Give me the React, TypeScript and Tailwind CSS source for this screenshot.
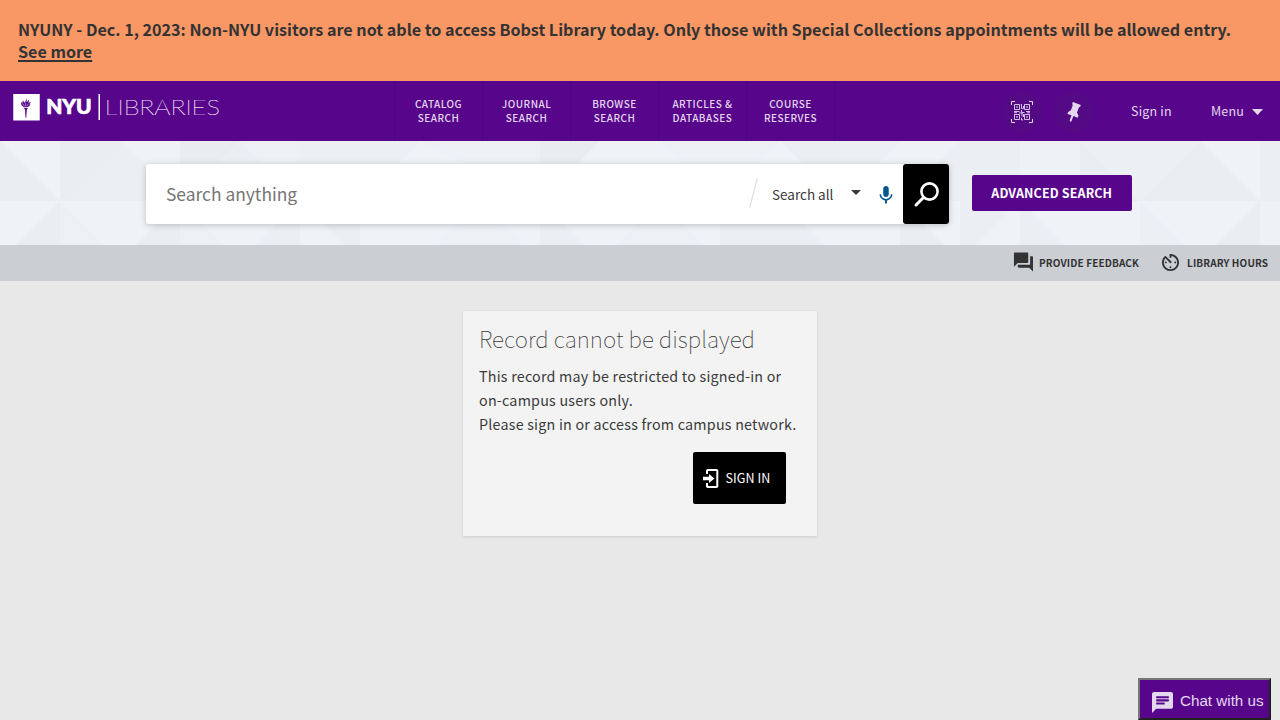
import type { ReactNode } from "react";

const links = [
  ["CATALOG", "SEARCH"],
  ["JOURNAL", "SEARCH"],
  ["BROWSE", "SEARCH"],
  ["ARTICLES &", "DATABASES"],
  ["COURSE", "RESERVES"],
];

const LIGHT = "#eff3f8";
const MID = "#edf0f5";
const DARK = "#eaedf2";

const triangles: [string, string][] = [
  ["0,0 60,60 0,60", DARK],
  ["60,0 120,0 180,60 60,60", "#ebeff3"],
  ["60,60 120,0 60,0", DARK],
  ["180,0 240,0 180,60", "#e9edf2"],
  ["240,0 180,60 300,60", "#ebeff4"],
  ["240,0 300,0 300,60", MID],
  ["300,0 420,0 360,60 300,60", "#ecf0f5"],
  ["420,0 540,0 540,60", MID],
  ["540,0 600,0 540,60", "#e9edf2"],
  ["660,0 780,0 720,60", MID],
  ["780,0 840,0 840,60", "#ebeef3"],
  ["840,0 900,0 840,60", "#ecf0f5"],
  ["900,60 960,0 960,60", "#ebeef3"],
  ["960,0 1020,0 1020,60 960,60", "#ebeff4"],
  ["1020,0 1080,0 1080,60 1020,60", "#eef2f7"],
  ["1080,0 1140,60 1080,60", DARK],
  ["1080,0 1200,0 1140,60", "#ecf0f5"],
  ["1200,0 1260,60 1140,60", DARK],
  ["1260,0 1280,0 1280,60 1260,60", "#ebeff4"],
  ["60,60 60,120 0,120", DARK],
  ["60,60 120,120 60,120", "#edf1f6"],
  ["180,60 180,120 120,120", DARK],
  ["180,60 240,120 180,120", "#edf1f6"],
  ["300,60 300,120 240,120", "#ebeef3"],
  ["300,60 360,60 360,120", "#ebeff4"],
  ["480,60 540,120 420,120", MID],
  ["540,60 540,120 600,120", "#ebeef3"],
  ["660,60 720,120 600,120", MID],
  ["720,60 780,60 780,120 720,120", "#ebeff4"],
  ["780,60 840,120 780,120", "#ebeef3"],
  ["900,60 960,120 900,120", "#eaedf2"],
  ["960,60 1020,60 960,120", "#ebeff4"],
  ["1020,60 1080,120 1020,120", "#ebeef3"],
  ["1140,60 1200,120 1140,120", "#ecf0f5"],
  ["1260,60 1260,120 1200,120", DARK],
  ["1260,60 1280,60 1280,120 1260,120", "#eef1f6"],
];

function Backdrop() {
  return (
    <svg className="absolute inset-0 h-full w-full" viewBox="0 0 1280 104" aria-hidden="true">
      <rect width="1280" height="104" fill={LIGHT} />
      {triangles.map(([p, f], i) => (
        <polygon key={i} points={p} fill={f} />
      ))}
    </svg>
  );
}

function Torch() {
  return (
    <svg className="h-[26.500px] w-[27px] shrink-0" viewBox="0 0 27 27" aria-hidden="true">
      <rect width="27" height="27" fill="#fff" />
      <g fill="#57068c">
        <path d="M11 14.200h3.800l-1 2-.5 8h-.8l-.5-8z" />
        <path d="M11 13.400C8.600 12.500 7.600 11 8 8.200c.6.8 1 .9 1.300.5.2-1 .6-1.800 1.300-2.400-.2 1.700.1 2.400.7 2.500.9-.6 1.500-1.800 2.300-4.100.5 1.600.2 2.600-.3 3.700 1-.3 1.800-1.200 2.900-2.700.1 1.500-.3 2.200-1 3.100.8-.1 1.500-.4 2.800-1-.5 1.700-1.300 2.300-2 2.700.6.1 1 .1 1.600-.1-.6 1.600-2 2.600-3.600 3z" />
      </g>
      <path d="M9.500 9.500l1.800 3M12.800 8.800l-.5 3.800M15.500 10l-1.800 2.500" stroke="#fff" strokeWidth=".5" fill="none" />
    </svg>
  );
}

function QrIcon() {
  return (
    <svg className="h-[22px] w-[22px]" viewBox="0 0 22 22" fill="none" stroke="#e4d8ee" aria-hidden="true">
      <path d="M.5 4V.5H4M18 .5h3.500V4M21.500 18v3.500H18M4 21.500H.5V18" />
      <g strokeWidth=".9">
        <path d="M3.500 3.500h5v5h-5zM13.500 3.500h5v5h-5zM3.500 13.500h5v5h-5zM13.500 13.500h5v5h-5z" />
        <path d="M10.500 3v4.500h2V5M3 10.500h5.500M10.500 9v2.500h3M15 10.500h4M3 11.700h3M8 12h3v3.500M10.500 17v2h1.500M12.500 13v3M16 11.800h3" />
      </g>
      <path d="M5.300 6h1.400M15.300 6h1.400M5.300 16h1.400M15.300 16h1.400" strokeWidth="1.400" />
    </svg>
  );
}

function Round({ children }: { children: ReactNode }) {
  return <div className="flex h-10 w-10 items-center justify-center rounded-full bg-[#540a85]">{children}</div>;
}

export default function App() {
  return (
    <div className="relative flex h-[720px] w-[1280px] flex-col overflow-hidden bg-[#e8e8e8] font-['Noto_Sans_CJK_SC','Open_Sans',sans-serif] text-[#3a3a3a]">
      <div className="h-[81px] shrink-0 bg-[#f99765] px-[18px] pt-[18px] text-[16.11px] leading-[22px] font-bold text-[#333]">
        <div className="whitespace-nowrap">
          NYUNY - Dec. 1, 2023: Non-NYU visitors are not able to access Bobst Library today. Only those with Special Collections appointments will be allowed entry.
        </div>
        <a className="underline decoration-[1.500px] underline-offset-2">See more</a>
      </div>

      <header className="flex h-[60px] shrink-0 bg-[#57068c] text-[#e4d8ee]">
        <div className="flex w-[394px] items-start pt-[13px] pl-[13px] text-white">
          <Torch />
          <svg className="h-[27px] w-[184px]" viewBox="0 0 184 27" aria-label="NYU Libraries">
            <text x="6.200" y="20.300" textLength="45.500" lengthAdjust="spacingAndGlyphs" fill="#fff" stroke="#fff" strokeWidth=".7" fontFamily="Lato" fontWeight="900" fontSize="20.800">NYU</text>
            <rect x="58.500" width="1.500" height="26" fill="#fff" />
            <text x="64.800" y="20.500" textLength="115" lengthAdjust="spacingAndGlyphs" fill="#fff" fontFamily="Lato" fontWeight="100" fontSize="21.500" stroke="#fff" strokeWidth=".2">LIBRARIES</text>
          </svg>
        </div>
        <nav className="flex border-l border-[#4e057e] text-center text-[10px] leading-[14px] font-medium tracking-[0.5px]">
          {links.map(([a, b]) => (
            <a key={a} className="w-[88px] border-r border-[#4e057e] pt-4">
              <div className="whitespace-nowrap">{a}</div>
              <div>{b}</div>
            </a>
          ))}
        </nav>
        <div className="ml-auto flex items-center gap-3 text-[12.5px] tracking-[0.2px]">
          <div className="flex translate-x-px gap-3 pt-[2px]">
            <Round><QrIcon /></Round>
            <Round>
              <svg className="h-6 w-6" viewBox="0 0 24 24" fill="#e4d8ee" aria-hidden="true">
                <g transform="rotate(20 12 12)">
                  <path d="M7.500 3h8.500v2l-1 .8v5.700l2.500 2.500v2H12.800v5.500l-1 1-1-1V16H6.500v-2l2-2.500V5.800l-1-.8z" />
                </g>
              </svg>
            </Round>
          </div>
          <span className="ml-[26px] w-10 whitespace-nowrap">Sign in</span>
          <span className="ml-7 flex w-[69px] items-center whitespace-nowrap">
            Menu
            <svg className="mt-[2px] ml-2 h-[6px] w-[11px]" viewBox="0 0 11 6" fill="#e4d8ee"><path d="M0 0h11L5.500 6z" /></svg>
          </span>
        </div>
      </header>

      <section className="relative h-[104px] shrink-0">
        <Backdrop />
        <div className="relative flex items-start pt-[22.500px] pl-[146px]">
          <div className="flex h-[60px] w-[803px] items-center rounded-[3px] bg-white shadow-[0_1px_6px_rgba(0,0,0,0.22)]">
            <span className="w-[603px] pl-5 text-[17.4px] leading-[60px] text-[#757575]">Search anything</span>
            <svg className="h-[30px] w-[9px] -translate-y-px" viewBox="0 0 9 30" stroke="#dedede" strokeWidth="1.200"><path d="M.8 29.500 8.200.5" /></svg>
            <span className="ml-[14px] w-[79px] pt-px whitespace-nowrap text-[13.5px]">Search all</span>
            <svg className="h-[5px] w-[10px] -translate-y-px" viewBox="0 0 10 5" fill="#3a3a3a"><path d="M0 0h10L5 5z" /></svg>
            <svg className="ml-[15px] h-5 w-5 translate-y-px" viewBox="0 0 24 24" fill="#00558c">
              <path d="M12 14c1.660 0 3-1.340 3-3V5c0-1.660-1.340-3-3-3S9 3.340 9 5v6c0 1.660 1.340 3 3 3zM17.300 11c0 3-2.540 5.100-5.300 5.100S6.700 14 6.700 11H5c0 3.410 2.720 6.230 6 6.720V21h2v-3.280c3.280-.48 6-3.300 6-6.720z" transform="translate(-1.200 -1) scale(1.100)" />
            </svg>
            <button className="ml-auto flex h-[60px] w-[46px] items-center justify-center rounded-[3px] bg-black">
              <svg className="h-[27px] w-[27px] translate-y-px" viewBox="0 0 27 27" fill="none" stroke="#fff">
                <circle cx="16.500" cy="10.500" r="8.100" strokeWidth="2.600" />
                <path d="M10.500 16.500 3 24" strokeWidth="3" strokeLinecap="round" />
              </svg>
            </button>
          </div>
          <button className="mt-[11.500px] ml-[22.500px] h-9 w-[160.500px] whitespace-nowrap rounded-[2px] bg-[#57068c] text-[12.5px] font-bold tracking-[0.13px] text-white">ADVANCED SEARCH</button>
        </div>
      </section>

      <div className="flex h-9 shrink-0 items-center bg-[#cbced3] pb-[2px] text-[10px] font-bold tracking-[0.13px] text-[#333]">
        <svg className="ml-[1013px] h-5 w-5" viewBox="1 1.500 21 21" fill="#333"><path d="M21 6h-2v9H6v2c0 .55.45 1 1 1h11l4 4V7c0-.55-.45-1-1-1zm-4 6V3c0-.55-.45-1-1-1H3c-.55 0-1 .45-1 1v14l4-4h10c.55 0 1-.45 1-1z" /></svg>
        <span className="ml-[6px] w-[122px] pt-px whitespace-nowrap">PROVIDE FEEDBACK</span>
        <svg className="h-[19px] w-[19px]" viewBox="2 2 20 20" fill="#333">
          <path d="M11 17c0 .55.45 1 1 1s1-.45 1-1-.45-1-1-1-1 .45-1 1zm0-14v4h2V5.080c3.390.49 6 3.390 6 6.920 0 3.870-3.130 7-7 7s-7-3.130-7-7c0-1.680.59-3.220 1.580-4.420L12 13l1.410-1.410-6.800-6.800v.02C4.420 6.450 3 9.050 3 12c0 4.970 4.020 9 9 9 4.970 0 9-4.030 9-9s-4.030-9-9-9h-1zm7 9c0-.55-.45-1-1-1s-1 .45-1 1 .45 1 1 1 1-.45 1-1zM6 12c0 .55.45 1 1 1s1-.45 1-1-.45-1-1-1-1 .45-1 1z" />
        </svg>
        <span className="ml-[7px] pt-px whitespace-nowrap">LIBRARY HOURS</span>
      </div>

      <main className="flex justify-center pt-[30px]">
        <section className="flex h-[225px] w-[354px] flex-col bg-[#f3f3f3] px-4 pt-[10px] shadow-[0_1px_3px_rgba(0,0,0,0.12)]">
          <h1 className="whitespace-nowrap text-[22.5px] leading-[34px] font-thin tracking-[0.05px]">Record cannot be displayed</h1>
          <p className="mt-[9px] whitespace-nowrap text-[14.3px] leading-6 tracking-[0.22px]">
            This record may be restricted to signed-in or<br />
            on-campus users only.<br />
            Please sign in or access from campus network.
          </p>
          <button className="mt-4 mr-[15.500px] flex h-[52px] w-[93px] items-center self-end rounded-[2px] bg-black pl-[10px] text-[12.5px] tracking-[0.1px] whitespace-nowrap text-white">
            <svg className="mr-[7px] h-[19px] w-4" viewBox="0 0 16 19" fill="none" stroke="#fff" strokeWidth="2">
              <path d="M4 5V1.800q0-.8.8-.8h8.700q.8 0 .8.800v15.400q0 .8-.8.8H4.800q-.8 0-.8-.8V14" />
              <path d="M0 7.800h6V5l5.500 4.500L6 14v-2.800H0z" fill="#fff" stroke="none" />
            </svg>
            SIGN IN
          </button>
        </section>
      </main>

      <button className="absolute top-[678px] left-[1138px] flex h-[42px] w-[133px] items-center border-2 border-t-[#767676] border-r-[#212121] border-b-[#212121] border-l-[#767676] bg-[#57068c] pt-1 pl-3 font-['Liberation_Sans',sans-serif] text-[15.2px] whitespace-nowrap text-[#e4d8ee]">
        <svg className="mr-[7px] h-[21px] w-[21px] translate-y-px" viewBox="2 2 20 20" fill="#e4d8ee"><path d="M20 2H4c-1.100 0-1.990.9-1.990 2L2 22l4-4h14c1.100 0 2-.9 2-2V4c0-1.100-.9-2-2-2zM6 9h12v2H6V9zm8 5H6v-2h8v2zm4-6H6V6h12v2z" /></svg>
        Chat with us
      </button>
    </div>
  );
}
